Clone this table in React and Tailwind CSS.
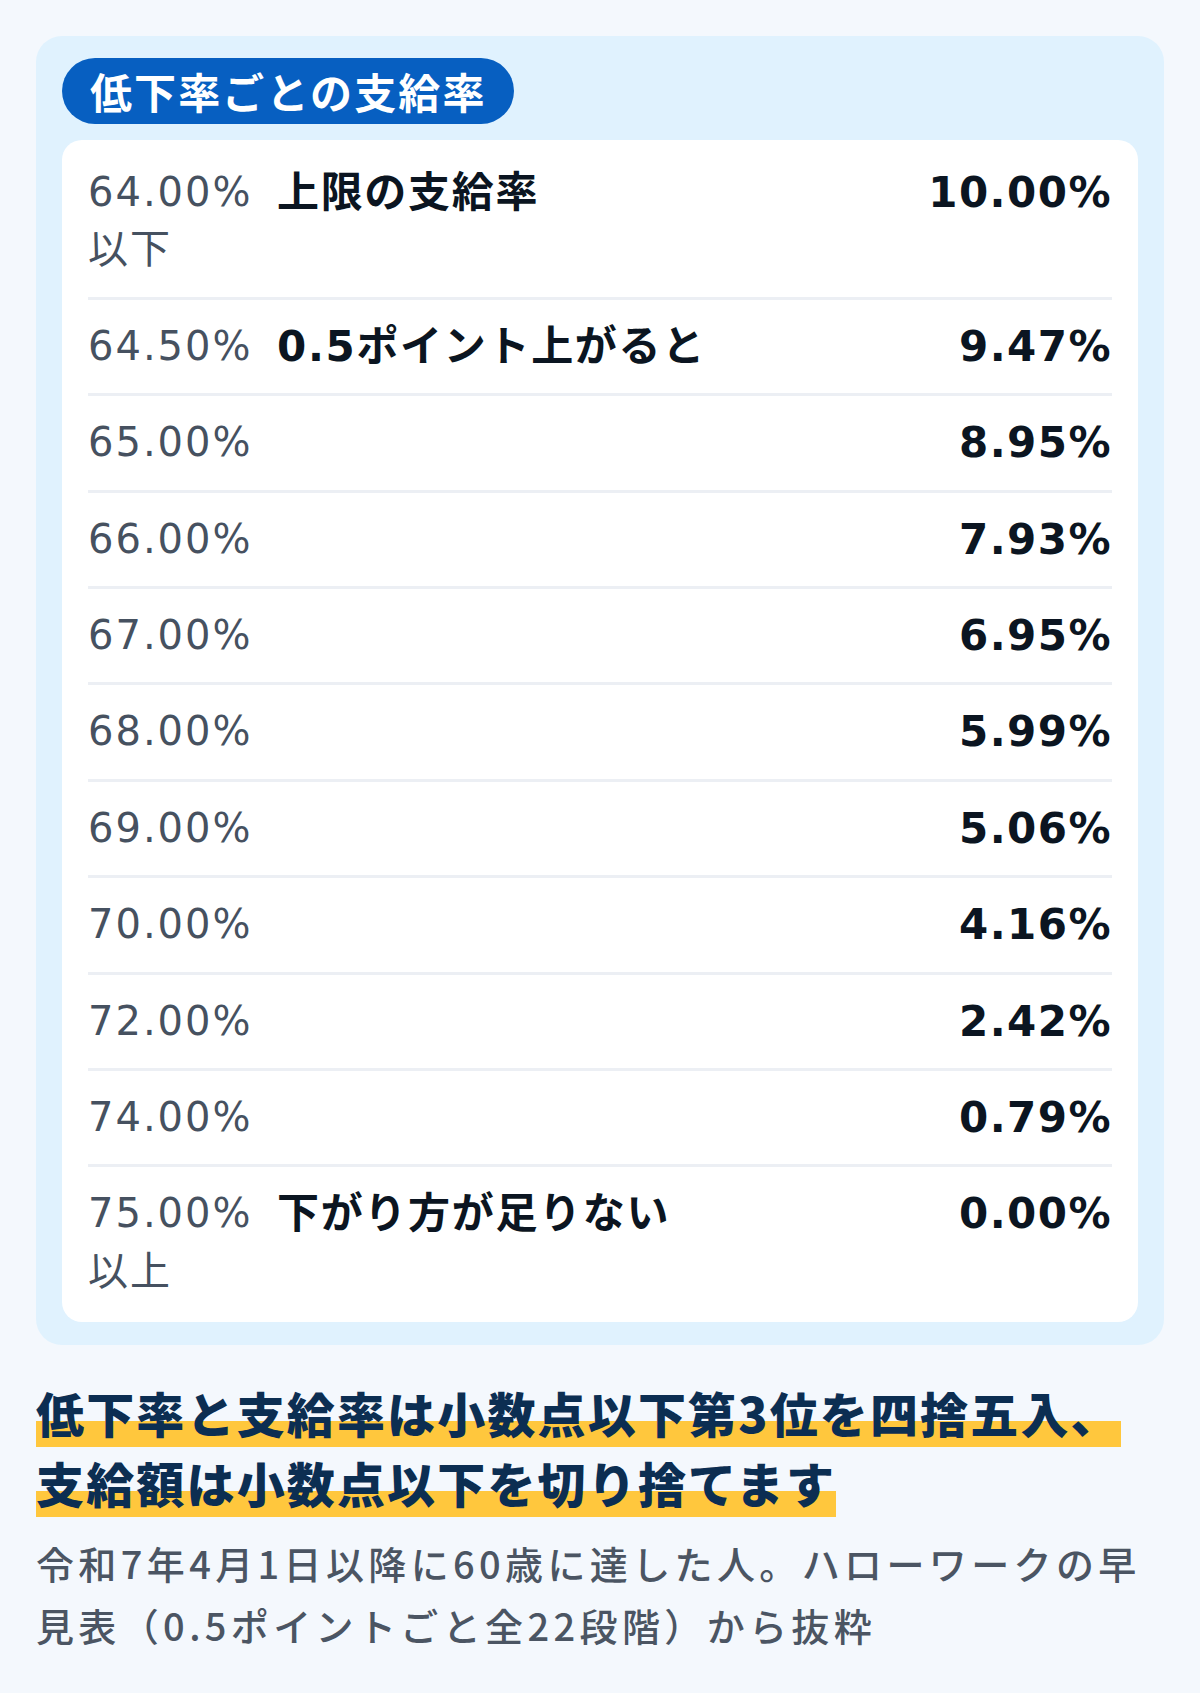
const rows = [
  { rate: '64.00%', sub: '以下', note: '上限の支給率', pay: '10.00%' },
  { rate: '64.50%', note: '0.5ポイント上がると', pay: '9.47%' },
  { rate: '65.00%', pay: '8.95%' },
  { rate: '66.00%', pay: '7.93%' },
  { rate: '67.00%', pay: '6.95%' },
  { rate: '68.00%', pay: '5.99%' },
  { rate: '69.00%', pay: '5.06%' },
  { rate: '70.00%', pay: '4.16%' },
  { rate: '72.00%', pay: '2.42%' },
  { rate: '74.00%', pay: '0.79%' },
  { rate: '75.00%', sub: '以上', note: '下がり方が足りない', pay: '0.00%' },
]

function RateRow({ row, first }) {
  return (
    <div
      className={
        'grid grid-cols-[189px_1fr_auto] items-start pb-[18px] border-b-[3px] border-[#eceff4] last:border-b-0 ' +
        (first ? 'pt-[20px]' : 'pt-[18px]')
      }
    >
      <div className="text-[40px] leading-[57.4px] tracking-[0.05em] text-[#465160]">
        {row.rate}
        {row.sub && (
          <>
            <br />
            {row.sub}
          </>
        )}
      </div>
      <div className="text-[42px] leading-[57.4px] tracking-[0.04em] font-bold text-[#0b1521]">
        {row.note}
      </div>
      <div className="text-[42px] leading-[57.4px] tracking-[0.035em] font-bold text-right text-[#0b1521]">
        {row.pay}
      </div>
    </div>
  )
}

export default function App() {
  return (
    <div className="min-h-screen bg-[#f4f8fd] px-[36px] pt-[36px] pb-[36px] font-['Noto_Sans_CJK_JP',sans-serif]">
      <div className="rounded-[26px] bg-[#e0f2fe] px-[26px] pt-[22px] pb-[23px]">
        <div className="inline-flex items-center h-[66px] rounded-full bg-[#075fc1] px-[28px] text-[42px] leading-none font-bold tracking-[0.05em] text-white">
          低下率ごとの支給率
        </div>

        <div className="mt-[16px] rounded-[20px] bg-white px-[26px] py-[4px] font-['DejaVu_Sans','Noto_Sans_CJK_JP',sans-serif]">
          {rows.map((row, i) => (
            <RateRow key={row.rate} row={row} first={i === 0} />
          ))}
        </div>
      </div>

      <h2 className="mt-[32px] text-[48px] leading-[70px] font-black tracking-[0.045em] text-[#0c2e52]">
        <span className="bg-[linear-gradient(transparent_63%,#ffc73d_63%)] box-decoration-clone">
          低下率と支給率は小数点以下第3位を四捨五入、
          <br />
          支給額は小数点以下を切り捨てます
        </span>
      </h2>

      <p className="mt-[15px] text-[38px] leading-[62px] tracking-[0.115em] font-medium text-[#4b5563]">
        令和7年4月1日以降に60歳に達した人。ハローワークの早
        <br />
        見表（0.5ポイントごと全22段階）から抜粋
      </p>
    </div>
  )
}
